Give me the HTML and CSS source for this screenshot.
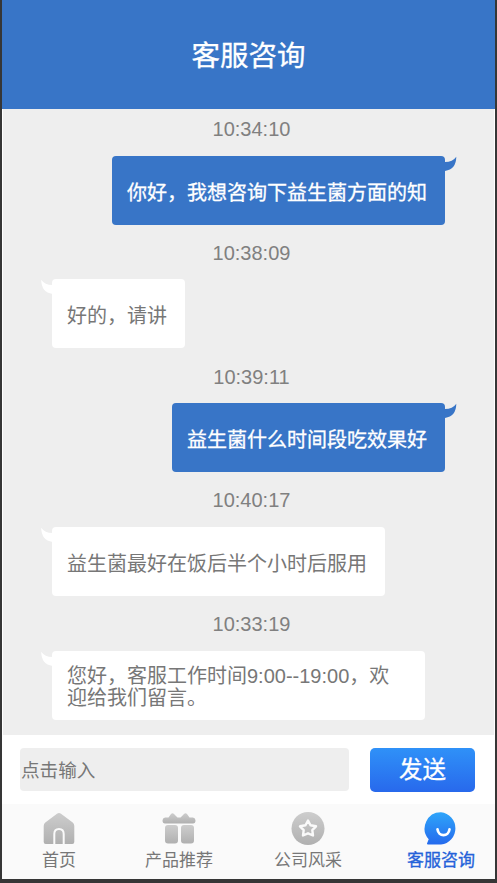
FILE: index.html
```html
<!DOCTYPE html>
<html lang="zh-CN">
<head>
<meta charset="utf-8">
<title>客服咨询</title>
<link rel="stylesheet" href="styles.css">
</head>
<body>
<div class="app">
  <header class="header"><h1 class="title">客服咨询</h1></header>
  <main class="messages">
    <section class="entry entry-sent">
      <time class="time">10:34:10</time>
      <div class="bubble">你好，我想咨询下益生菌方面的知<svg class="tail" viewBox="0 0 12 16"><path d="M0 6Q8 6 11.8 0.5Q11.5 14 0 15.2Z"/></svg></div>
    </section>
    <section class="entry">
      <time class="time">10:38:09</time>
      <div class="bubble">好的，请讲<svg class="tail" viewBox="0 0 12 16"><path d="M0 6Q8 6 11.8 0.5Q11.5 14 0 15.2Z"/></svg></div>
    </section>
    <section class="entry entry-sent">
      <time class="time">10:39:11</time>
      <div class="bubble">益生菌什么时间段吃效果好<svg class="tail" viewBox="0 0 12 16"><path d="M0 6Q8 6 11.8 0.5Q11.5 14 0 15.2Z"/></svg></div>
    </section>
    <section class="entry">
      <time class="time">10:40:17</time>
      <div class="bubble">益生菌最好在饭后半个小时后服用<svg class="tail" viewBox="0 0 12 16"><path d="M0 6Q8 6 11.8 0.5Q11.5 14 0 15.2Z"/></svg></div>
    </section>
    <section class="entry">
      <time class="time">10:33:19</time>
      <div class="bubble bubble-wide"><p class="lines">您好，客服工作时间9:00--19:00，欢<br>迎给我们留言。</p><svg class="tail" viewBox="0 0 12 16"><path d="M0 6Q8 6 11.8 0.5Q11.5 14 0 15.2Z"/></svg></div>
    </section>
  </main>
  <form class="composer">
    <div class="field">点击输入</div>
    <button class="send" type="button">发送</button>
  </form>
  <nav class="tabs">
    <a class="tab">
      <svg class="icon" viewBox="0 0 34 34">
        <defs><linearGradient id="gray" x1="0" y1="0" x2="0" y2="1"><stop offset="0" stop-color="#cdcdcd"/><stop offset="1" stop-color="#b0b0b0"/></linearGradient></defs>
        <path fill="url(#gray)" d="M15 1.800Q17 .2 19 1.800L30.700 10.400Q32.300 11.800 32.300 14V30Q32.300 32 30.300 32H3.700Q1.700 32 1.700 30V14Q1.700 11.800 3.300 10.400Z"/>
        <path fill="none" stroke="#fafafa" stroke-width="2" d="M12.300 32V22Q12.300 17 17 17T21.700 22V32"/>
      </svg>
      <span>首页</span>
    </a>
    <a class="tab">
      <svg class="icon" viewBox="0 0 34 34">
        <path fill="url(#gray)" d="M3 5.500H6.500L9 2Q10.500 .5 12 2L15.500 5.500H18.500L22 2Q23.500 .5 25 2L27.500 5.500H31Q33.500 5.800 33.500 8.500Q33.500 11.500 31 11.500H3Q.5 11.500 .5 8.500Q.5 5.800 3 5.500Z"/>
        <rect fill="url(#gray)" x="3" y="13" width="13" height="18.500" rx="3"/>
        <rect fill="url(#gray)" x="19" y="13" width="13" height="18.500" rx="3"/>
      </svg>
      <span>产品推荐</span>
    </a>
    <a class="tab">
      <svg class="icon" viewBox="0 0 34 34">
        <circle fill="url(#gray)" cx="17" cy="16.500" r="16.500"/>
        <path fill="none" stroke="#fafafa" stroke-width="2.400" stroke-linejoin="round" d="M17 8.500L19.500 13.200L25 14.300L21.300 18.200L22 23.500L17 21.300L12 23.500L12.700 18.200L9 14.300L14.500 13.200Z"/>
      </svg>
      <span>公司风采</span>
    </a>
    <a class="tab tab-active">
      <svg class="icon" viewBox="0 0 34 34">
        <defs><linearGradient id="blue" x1="0" y1="0" x2="0" y2="1"><stop offset="0" stop-color="#2ea5fa"/><stop offset="1" stop-color="#256aed"/></linearGradient></defs>
        <path fill="url(#blue)" d="M17 .3A16.200 16.200 0 0 1 17 32.500H4Q2.500 32.300 3.200 31L4.700 27.200A16.200 16.200 0 0 1 17 .3Z"/>
        <path fill="none" stroke="#fff" stroke-width="2.700" stroke-linecap="round" d="M13.500 17.300C14.500 25 24.500 25 25.500 17.300"/>
      </svg>
      <span>客服咨询</span>
    </a>
  </nav>
</div>
</body>
</html>
```
FILE: styles.css
```css
* { box-sizing: border-box; }
body {
  margin: 0;
  background: #363636;
  font-family: "Liberation Sans", "Noto Sans CJK SC", sans-serif;
}
.app {
  display: flex;
  flex-direction: column;
  height: 883px;
  border: solid #363636;
  border-width: 0 2px 4px;
  background: #fff;
}
.header {
  display: flex;
  align-items: center;
  justify-content: center;
  height: 109px;
  flex: none;
  padding-top: 2px;
  background: #3875c7;
}
.title {
  margin: 0;
  font-size: 28.500px;
  font-weight: 400;
  line-height: 40px;
  color: #fff;
  -webkit-text-stroke: 0.3px #fff;
}
.messages {
  height: 626px;
  flex: none;
  margin: 0 1px;
  background: #eee;
}
.entry {
  display: flex;
  flex-direction: column;
  align-items: flex-start;
  height: 123.800px;
  padding: 0 49px;
}
.entry-sent { align-items: flex-end; }
.time {
  align-self: center;
  height: 46.500px;
  flex: none;
  padding-left: 6px;
  font-size: 20px;
  line-height: 41px;
  color: #808080;
}
.bubble {
  position: relative;
  height: 69px;
  padding: 0 18px 0 15px;
  border-radius: 4px;
  background: #fff;
  color: #777;
  font-size: 20px;
  line-height: 75px;
  white-space: nowrap;
}
.entry-sent .bubble {
  background: #3875c7;
  color: #fff;
  -webkit-text-stroke: 0.3px #fff;
}
.bubble-wide { width: 373px; }
.lines {
  margin: 0;
  padding-top: 14.500px;
  line-height: 22px;
}
.tail {
  position: absolute;
  top: 0;
  right: 100%;
  width: 11.500px;
  height: 16px;
  transform: scaleX(-1);
  fill: #fff;
}
.entry-sent .tail {
  right: auto;
  left: 100%;
  transform: none;
  fill: #3875c7;
}
.composer {
  display: flex;
  align-items: center;
  gap: 21px;
  height: 69px;
  flex: none;
  padding: 0 18px;
}
.field {
  width: 329px;
  height: 43px;
  padding-left: 1px;
  border-radius: 4px;
  background: #eee;
  color: #777;
  font-size: 18.600px;
  line-height: 46px;
}
.send {
  width: 105px;
  height: 44px;
  padding: 0;
  border: 0;
  border-radius: 5px;
  background: linear-gradient(#2f91f8, #2869ec);
  color: #fff;
  font: inherit;
  font-size: 23.500px;
  line-height: 42px;
  -webkit-text-stroke: 0.3px #fff;
}
.tabs {
  display: grid;
  grid-template-columns: 114px 126px 132px 121px;
  flex: 1;
  padding-top: 8px;
  background: #fafafa;
}
.tab {
  display: flex;
  flex-direction: column;
  align-items: center;
  color: #777;
  font-size: 17px;
  line-height: 29px;
}
.tab-active {
  color: #2462d9;
  padding-left: 13px;
  -webkit-text-stroke: 0.3px #2462d9;
}
.icon {
  width: 34px;
  height: 34px;
}
```
